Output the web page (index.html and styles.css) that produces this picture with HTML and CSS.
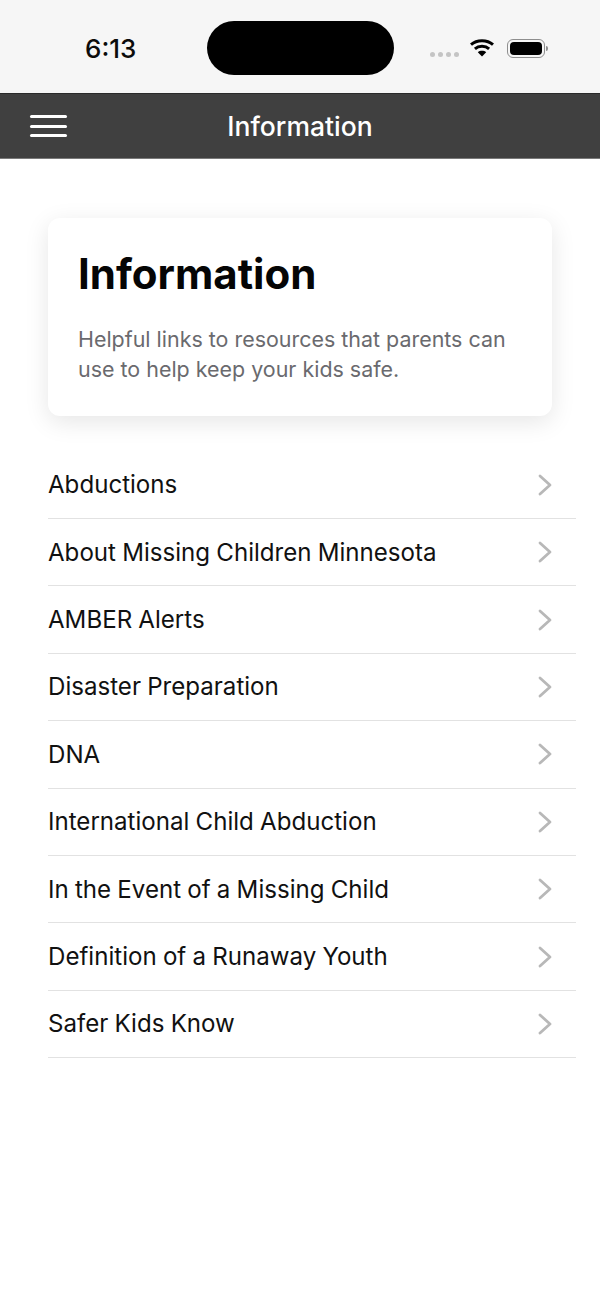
FILE: index.html
```html
<!DOCTYPE html>
<html lang="en">
<head>
<meta charset="utf-8">
<title>Information</title>
<link rel="stylesheet" href="styles.css">
</head>
<body>
<div class="status">
  <span class="time">6:13</span>
  <span class="island"></span>
  <span class="dots"><i></i><i></i><i></i><i></i></span>
  <svg class="wifi" width="26" height="20" viewBox="0 0 26 20"><path d="M2 6.6C7.9 1.4 18.1 1.4 24 6.6" fill="none" stroke="#000" stroke-width="3"/><path d="M5.9 10.8C9.7 7.5 16.3 7.5 20.1 10.8" fill="none" stroke="#000" stroke-width="3"/><path d="M13 18.5L8.8 14.2C11 12.3 15 12.3 17.2 14.2Z" fill="#000"/></svg>
  <span class="battery"><span class="cell"></span></span><span class="cap"></span>
</div>
<header class="nav">
  <span class="burger"><i></i><i></i><i></i></span>
  <span class="nav-title">Information</span>
</header>
<main class="content">
  <section class="card">
    <h1>Information</h1>
    <p>Helpful links to resources that parents can use to help keep your kids safe.</p>
  </section>
  <ul class="list">
    <li>Abductions<svg class="chev" width="14" height="22" viewBox="0 0 14 22"><path d="M2 2L12 11L2 20"/></svg></li>
    <li>About Missing Children Minnesota<svg class="chev" width="14" height="22" viewBox="0 0 14 22"><path d="M2 2L12 11L2 20"/></svg></li>
    <li>AMBER Alerts<svg class="chev" width="14" height="22" viewBox="0 0 14 22"><path d="M2 2L12 11L2 20"/></svg></li>
    <li>Disaster Preparation<svg class="chev" width="14" height="22" viewBox="0 0 14 22"><path d="M2 2L12 11L2 20"/></svg></li>
    <li>DNA<svg class="chev" width="14" height="22" viewBox="0 0 14 22"><path d="M2 2L12 11L2 20"/></svg></li>
    <li>International Child Abduction<svg class="chev" width="14" height="22" viewBox="0 0 14 22"><path d="M2 2L12 11L2 20"/></svg></li>
    <li>In the Event of a Missing Child<svg class="chev" width="14" height="22" viewBox="0 0 14 22"><path d="M2 2L12 11L2 20"/></svg></li>
    <li>Definition of a Runaway Youth<svg class="chev" width="14" height="22" viewBox="0 0 14 22"><path d="M2 2L12 11L2 20"/></svg></li>
    <li>Safer Kids Know<svg class="chev" width="14" height="22" viewBox="0 0 14 22"><path d="M2 2L12 11L2 20"/></svg></li>
  </ul>
</main>
</body>
</html>
```
FILE: styles.css
```css
* { box-sizing: border-box; }
html, body { margin: 0; padding: 0; background: #fff; }
body { width: 600px; height: 1299px; overflow: hidden; font-family: Inter, "Liberation Sans", sans-serif; color: #0a0a0a; }
.status { height: 93px; background: #f6f6f6; display: flex; align-items: flex-start; }
.time { margin: 35px 0 0 85px; width: 52px; font-size: 26px; line-height: 28px; font-weight: 500; color: #0c0c0c; }
.island { margin: 21px 0 0 69.5px; width: 187px; height: 54px; border-radius: 27px; background: #000; }
.dots { margin: 52px 0 0 36.5px; display: flex; gap: 3px; }
.dots i { width: 5px; height: 5px; border-radius: 50%; background: #c4c4c4; }
.wifi { margin: 38px 0 0 10px; }
.battery { margin: 39px 0 0 12px; width: 38px; height: 19px; border: 1.5px solid #8e8e8e; border-radius: 6px; padding: 2px; display: flex; }
.cell { flex: 1; background: #000; border-radius: 4px; }
.cap { margin: 46px 0 0 1px; width: 2px; height: 5px; background: #8e8e8e; border-radius: 0 2px 2px 0; }
.nav { height: 66px; background: #404040; border-top: 1px solid #2a2a2a; border-bottom: 1px solid #7a7a7a; display: flex; align-items: center; justify-content: center; position: relative; }
.burger { position: absolute; left: 30px; top: 21px; width: 37px; display: flex; flex-direction: column; gap: 6.5px; }
.burger i { height: 3px; border-radius: 2px; background: #fff; }
.nav-title { color: #fff; font-size: 26.5px; font-weight: 500; line-height: 32px; }
.content { padding: 59px 24px 0 48px; }
.card { width: 504px; height: 198px; background: #fff; border-radius: 12px; box-shadow: 0 6px 24px rgba(0,0,0,.10); padding: 30px 30px 0; }
.card h1 { margin: 0; font-size: 42px; line-height: 52px; font-weight: 700; color: #050505; }
.card p { margin: 24px 0 0; font-size: 21.45px; line-height: 30px; color: #6a6a6e; }
.list { list-style: none; margin: 35.6px 0 0; padding: 0; }
.list li { height: 67.4px; border-bottom: 1px solid #e2e2e2; display: flex; align-items: center; justify-content: space-between; padding-right: 24px; font-size: 24.1px; word-spacing: -0.55px; color: #111; }
.chev { fill: none; stroke: #b8b8b8; stroke-width: 2.8; stroke-linecap: round; stroke-linejoin: round; }
```
